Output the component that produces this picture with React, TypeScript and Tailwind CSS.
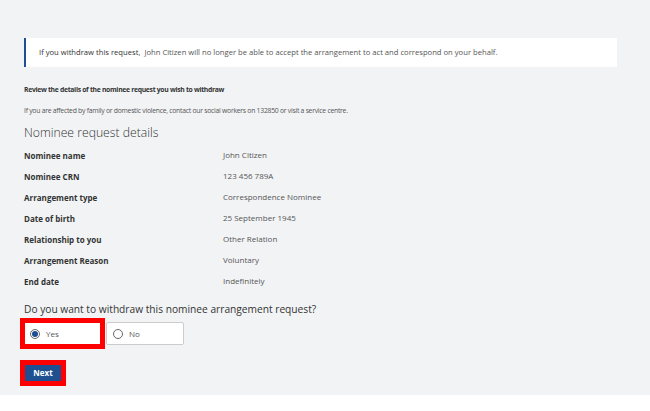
const rows: [string, string][] = [
  ['Nominee name', 'John Citizen'],
  ['Nominee CRN', '123 456 789A'],
  ['Arrangement type', 'Correspondence Nominee'],
  ['Date of birth', '25 September 1945'],
  ['Relationship to you', 'Other Relation'],
  ['Arrangement Reason', 'Voluntary'],
  ['End date', 'Indefinitely'],
]

function Radio({ checked }: { checked?: boolean }) {
  return (
    <span className="flex h-[10px] w-[10px] items-center justify-center rounded-full border border-[#666] bg-white">
      {checked && <span className="h-[6px] w-[6px] rounded-full bg-[#1d4f91]" />}
    </span>
  )
}

export default function App() {
  return (
    <div className="min-h-[411px] bg-white font-['Open_Sans',sans-serif]">
      <div className="h-[395px] bg-[#f2f3f5] pl-6 pt-[38px]">
        <div className="flex h-[29px] w-[593px] items-center border-l-2 border-[#1d4f91] bg-white pl-[13px] text-[7.65px] text-[#555]">
          <span className="text-[#333]">If you withdraw this request,</span>
          <span className="ml-[4px]">John Citizen will no longer be able to accept the arrangement to act and correspond on your behalf.</span>
        </div>

        <p className="mt-[17px] text-[6.8px] leading-[12px] font-bold tracking-[-0.3px] text-[#333]">
          Review the details of the nominee request you wish to withdraw
        </p>
        <p className="mt-[9px] text-[6.8px] leading-[12px] tracking-[-0.25px] text-[#555]">
          If you are affected by family or domestic violence, contact our social workers on 132850 or visit a service centre.
        </p>

        <h2 className="mt-[6px] text-[12.2px] leading-[20px] font-light text-[#333]">Nominee request details</h2>

        <dl className="mt-[2px]">
          {rows.map(([label, value]) => (
            <div key={label} className="flex h-[21px] items-center text-[8px]">
              <dt className="w-[199px] font-bold text-[#333]">{label}</dt>
              <dd className="-mt-[2px] text-[#555]">{value}</dd>
            </div>
          ))}
        </dl>

        <p className="mt-[9px] text-[10.2px] leading-[16px] text-[#333]">
          Do you want to withdraw this nominee arrangement request?
        </p>

        <div className="-ml-1 mt-[1px] flex items-start gap-px">
          <label className="flex h-[31px] w-[85px] items-center gap-[6px] border-[5px] border-[#ff0000] bg-white pl-[5px] text-[8px] text-[#555]">
            <Radio checked />
            Yes
          </label>
          <label className="mt-[4px] flex h-[23px] w-[78px] items-center gap-[6px] rounded-[2px] border border-[#ccc] bg-white pl-[6px] text-[8px] text-[#555]">
            <Radio />
            No
          </label>
        </div>

        <div className="-ml-1 mt-[11px] inline-flex border-[5px] border-[#ff0000]">
          <button className="flex h-[16px] w-[36px] items-center justify-center bg-[#1d4f91] text-[8px] font-bold text-white">
            Next
          </button>
        </div>
      </div>
    </div>
  )
}
